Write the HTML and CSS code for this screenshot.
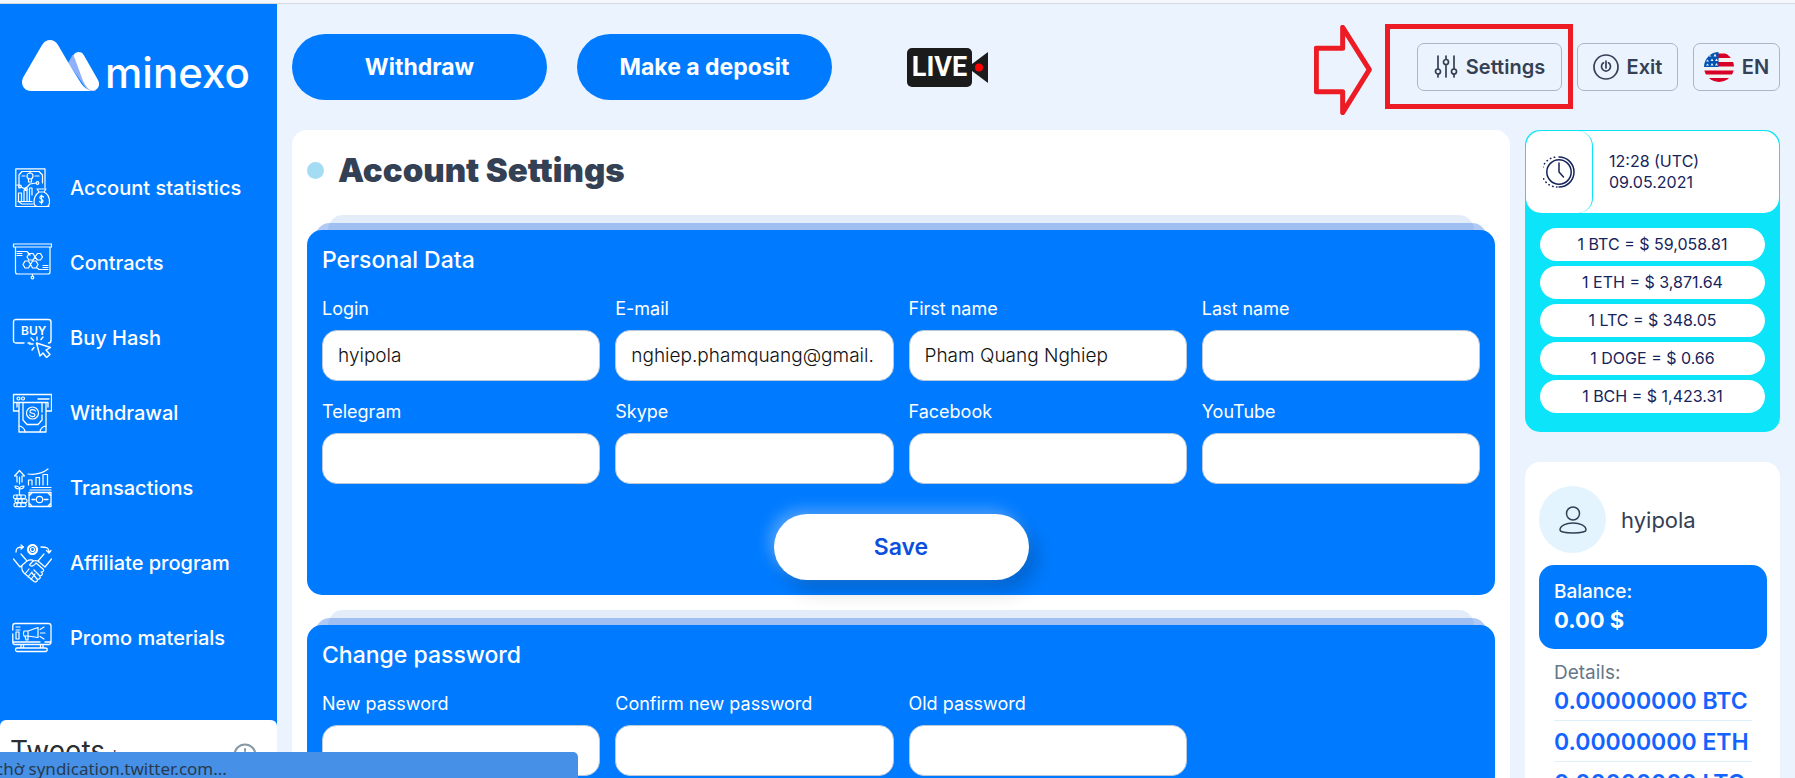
FILE: index.html
```
<!DOCTYPE html>
<html lang="en">
<head>
    <meta charset="UTF-8">
    <meta name="viewport" content="width=device-width, initial-scale=1.0">
    <title>Account Settings - minexo</title>
    <link rel="stylesheet" href="styles.css">
</head>
<body>
    <div class="page">
        <aside class="sidebar">
            <a class="logo" href="#">
                <svg width="77" height="51" viewBox="0 0 77 51">
                    <path fill="#8fb0fb" d="M46 23 L50.500 15 L58 16 L66 40 L74 51 H66 Z"/>
                    <path fill="#fff" d="M20 5 C24 -1.600 32 -1.600 36 5 L46.500 23 L57 40 C60 45 64 50 70 51 H9 C1 51 -2.500 43 2 36 Z"/>
                    <path fill="#fff" d="M51.500 15 C54 11 60 11 62 15.500 L76 40 C79 46 75 51 70 50.500 C66 50 62 44 60 38 Z"/>
                </svg>
                <span>minexo</span>
            </a>
            <nav class="menu">
                <a href="#">
                    <svg viewBox="0 0 40 40">
                        <path d="M33 20 V.800 H3.800 V38.500 H37 M7 20 V7 L10 3.500 H27 L30.500 7 V15 M7 34 L10 36 H21 M7 17 H5"/>
                        <circle cx="18" cy="8" r="3"/>
                        <path d="M16.500 11 V14 H19.500 V11 M18 3 V5 M10 8 H13 M23 8 H27"/>
                        <circle cx="8" cy="18.500" r="1.300"/><circle cx="14" cy="21" r="1.300"/><circle cx="25.500" cy="15" r="1.300"/>
                        <path d="M9 19 L13 21 L18 16 L24 15 M6.500 33 V25 H9.500 V33 M12 33 V22 H15 V33 M17.500 33 V20 H20 V27 M6 33.500 H20"/>
                        <path d="M27 24 L25 21 H34 L32 24 Z M27 24 C23 27 22 30 22 34 C22 37 23 38.500 26 38.500 H34 C37 38.500 37.500 37 37.500 34 C37.500 30 36 26 32 24"/>
                        <path d="M31.500 29 C30 27.500 27.500 28 28 30 C28.500 31.500 31 31 31 33 C31 35 28.500 35 27.500 33.500 M29.500 27 V36"/>
                    </svg>
                    Account statistics
                </a>
                <a href="#">
                    <svg viewBox="0 0 40 40">
                        <path d="M1.500 1 H39.500 V4 H1.500 Z M3.500 4 V29 Q3.500 31 5.500 31 H36 Q38 31 38 29 V4 M20.500 31 V33"/>
                        <circle cx="20.500" cy="34.500" r="1.300"/>
                        <path d="M5 8.500 H10 M5 10.500 H10 M5 12.500 H10 M11 8.500 H15 L18 12 M31 22.500 H36 M31 24.500 H36 M31 26.500 H36 M25 25 L27 26.500 H30"/>
                        <path d="M17 10.500 H21 L23 14 L21 17 H17 L15 14 Z M25.500 10.500 H28.500 L30.500 14 L28.500 17 H25.500 L23 14 Z M13 18 H16.500 L18.500 21.500 L16.500 25 H13 L11 21.500 Z M20.500 18 H24 L26 21.500 L24 25 H20.500 L18.500 21.500 Z"/>
                    </svg>
                    Contracts
                </a>
                <a href="#">
                    <svg viewBox="0 0 40 40">
                        <path stroke-width="1.400" d="M12 25 H4 Q1.500 25 1.500 22.500 V4 Q1.500 1.500 4 1.500 H36.500 Q39 1.500 39 4 V22.500 Q39 25 36.500 25 M16 25 H18"/>
                        <text x="9" y="17">BUY</text>
                        <path stroke-width="1.400" d="M24.500 25 L28 38 L31 35 L34.500 39.500 L38 36.500 L34 32 L38.500 29.500 Z M25 19 V22 M19 20 L21.500 22.500 M31 19 L29 21.500 M17.500 26 H21 M20 32 L22 29.500"/>
                    </svg>
                    Buy Hash
                </a>
                <a href="#">
                    <svg viewBox="0 0 40 40">
                        <path stroke-width="1.300" d="M7 18 H1.500 V1.500 H39.500 V18 H34 M5 9.500 H36 M1.500 9.500 H5 V14 M36 9.500 V14 M7 9.500 V39 H34 V9.500 M11 10 V27 L15 31.500 H26 L30 27 V22 M30 10 V19 M26 6 H37"/>
                        <circle cx="6.500" cy="5.500" r="1.500"/><circle cx="11" cy="5.500" r="1.500"/>
                        <circle cx="20.500" cy="20" r="6"/>
                        <path d="M23.500 18 C22 15.500 17.500 16.500 18 19 C18.500 21 23 19.500 23 22 C22.500 24.500 19 24 17.500 22 M7 33 C10 33 13 36 13 39 M34 33 C31 33 28 36 28 39"/>
                    </svg>
                    Withdrawal
                </a>
                <a href="#">
                    <svg viewBox="0 0 40 40">
                        <path d="M5 14 V8 H2.500 L7.500 2.500 L12.500 8 H10 V14 M7.500 9 V16 M16 6 C24 7 31 5 36 1 M16.500 17 V12 H20 V17 M24 17 V9.500 H27.500 V17 M31 17 V6.500 H35.500 V17"/>
                        <path d="M7.500 27 V21 C3 21 3 19 3 18 C6 18 7.500 19 7.500 21 C7.500 19 9 18 12 18 C12 20 11 21 7.500 21 M20 19.500 H39 M18 22 H39"/>
                        <path stroke-width="1.300" d="M17 38.500 V24.500 H39 V38.500 Z M17 28 L20 25 M36 25 L39 28 M17 35 L20 38 M36 38 L39 35 M20 31.500 H23 M32 31.500 H36"/>
                        <circle cx="27.500" cy="31.500" r="3.200"/>
                        <rect x="1.500" y="27" width="12" height="3.700" rx="1.500"/><rect x="3" y="31" width="12" height="3.700" rx="1.500"/><rect x="2" y="35" width="12" height="3.700" rx="1.500"/>
                        <path d="M5 27 V30 M9 27 V30 M6 31 V34.500 M10 31 V34.500 M5 35 V38 M9 35 V38"/>
                    </svg>
                    Transactions
                </a>
                <a href="#">
                    <svg viewBox="0 0 40 40">
                        <circle cx="20.500" cy="6.500" r="4.500" stroke-width="2.200" stroke-dasharray="2.500 1"/>
                        <circle cx="20.500" cy="6.500" r="2"/>
                        <path stroke-width="1.300" d="M4 9 C4 5 6 4 11 4 M9 2 L11.500 4 L9 6 M29 4 C35 4 37 5 37 9 M34.500 7.500 L37 10 L39 7.500"/>
                        <path stroke-width="1.200" d="M9 11 L15 18 L8 24 L1.500 16 M32 11 L26 18 L33 24 L39.500 16 M15 18 C18 16 21 17 22 18 C24 17 26 18 27 19 M10 23 C9 27 11 29 12 30 L22 38.500 C25 40 26 37 25 36 C28 37 29 34 27.500 33 C31 33 31 30 29 29 C32 29 32 27 31 26 L24 20 C22 23 19 24 17.500 22 L21 18 M13 31 L17 26 M16 34 L20 29 M19 36.500 L23 31 M22 27 L28 33 M20 30 L25 36"/>
                    </svg>
                    Affiliate program
                </a>
                <a href="#">
                    <svg viewBox="0 0 40 40">
                        <path stroke-width="1.300" d="M.800 12 V8 Q.800 5.500 3 5.500 H36.500 Q39 5.500 39 8 V24 Q39 26.500 36.500 26.500 H3 Q.800 26.500 .800 24 V16 M1 24 H28 M33 24 H39 M9 26.500 V30 M11.500 26.500 V30 M28.500 26.500 V30 M31 26.500 V30 M5 30 H33 C36 30 36 33.500 33 33.500 H5 C3 33.500 3 30 5 30"/>
                        <path d="M4 9 H8 M4 12 H8 M4 14 H7 V21 H4 Z M12 13 H16 L26 9.500 V19.500 L16 18 H12 Q11 15.500 12 13 M16 13 V22 H14 L13 18 M28.500 15 H33 M28 11.500 L32 9 M28 18.500 L32 21"/>
                    </svg>
                    Promo materials
                </a>
            </nav>
            <section class="tweets">
                <h2>Tweets <small>by</small></h2>
                <svg width="24" height="24" viewBox="0 0 24 24"><circle cx="12" cy="12" r="10.500"/><path d="M12 6 V8 M12 11 V17"/></svg>
            </section>
        </aside>

        <div class="content">
            <header class="topbar">
                <button type="button" class="btn">Withdraw</button>
                <button type="button" class="btn">Make a deposit</button>
                <a class="live" href="#">
                    <span>LIVE</span>
                    <svg width="16" height="31" viewBox="0 0 16 31"><path fill="#1b1b1b" d="M16 0 V31 L0 19 V12 Z"/><circle cx="7" cy="15.500" r="4" fill="#f00"/></svg>
                </a>
                <nav class="tools">
                    <div class="marked">
                        <a class="tool tool-settings" href="#">
                            <svg width="24" height="24" viewBox="0 0 24 24"><path d="M4 1 V14 M4 19 V22 M12 1 V4 M12 10 V22 M20 1 V14 M20 19 V22"/><circle cx="4" cy="16.500" r="2.500"/><circle cx="12" cy="7" r="2.500"/><circle cx="20" cy="16.500" r="2.500"/></svg>
                            Settings
                        </a>
                        <svg class="arrow" width="58" height="90" viewBox="72 75 174 270"><path d="M79 145 H158 V82 L238 209 L158 338 V275 H79 Z"/></svg>
                    </div>
                    <a class="tool" href="#">
                        <svg width="26" height="26" viewBox="0 0 26 26"><circle cx="13" cy="13" r="12"/><path d="M10.500 8.800 A4.500 4.500 0 1 0 15.500 8.800 M13 7 V14"/></svg>
                        Exit
                    </a>
                    <button type="button" class="tool tool-lang">
                        <svg class="flag" width="30" height="30" viewBox="0 0 30 30">
                            <clipPath id="round"><circle cx="15" cy="15" r="15"/></clipPath>
                            <g clip-path="url(#round)">
                                <rect width="30" height="30" fill="#f2f2f2"/>
                                <path fill="#d80027" d="M14 1.500 H30 V6 H14 Z M14 10 H30 V14.500 H14 Z M0 18.500 H30 V22.500 H0 Z M0 26 H30 V30 H0 Z"/>
                                <rect width="14.500" height="15" fill="#0052b4"/>
                                <path fill="#f2f2f2" d="M6 3 l1.500 1.500 h-3 Z M11 1.500 l1.500 3 h-3 Z M3.500 7.500 l1.500 2 h-3 Z M8 6.500 l1.500 2.500 h-3 Z M12.500 6.500 l1.500 2.500 h-3 Z M3.500 11.500 l1.500 2 h-3 Z M8 11 l1.500 2.500 h-3 Z M12.500 11 l1.500 2.500 h-3 Z"/>
                            </g>
                        </svg>
                        EN
                    </button>
                </nav>
            </header>

            <div class="columns">
                <main class="panel">
                    <h1>Account Settings</h1>
                    <form class="card">
                        <h2>Personal Data</h2>
                        <div class="fields">
                            <div class="field"><label for="login">Login</label><input type="text" id="login" value="hyipola"></div>
                            <div class="field"><label for="email">E-mail</label><input type="text" id="email" value="nghiep.phamquang@gmail."></div>
                            <div class="field"><label for="first-name">First name</label><input type="text" id="first-name" value="Pham Quang Nghiep"></div>
                            <div class="field"><label for="last-name">Last name</label><input type="text" id="last-name"></div>
                            <div class="field"><label for="telegram">Telegram</label><input type="text" id="telegram"></div>
                            <div class="field"><label for="skype">Skype</label><input type="text" id="skype"></div>
                            <div class="field"><label for="facebook">Facebook</label><input type="text" id="facebook"></div>
                            <div class="field"><label for="youtube">YouTube</label><input type="text" id="youtube"></div>
                        </div>
                        <button type="submit" class="btn btn-save">Save</button>
                    </form>
                    <form class="card">
                        <h2>Change password</h2>
                        <div class="fields">
                            <div class="field"><label for="new-password">New password</label><input type="password" id="new-password"></div>
                            <div class="field"><label for="confirm-password">Confirm new password</label><input type="password" id="confirm-password"></div>
                            <div class="field"><label for="old-password">Old password</label><input type="password" id="old-password"></div>
                        </div>
                    </form>
                </main>

                <aside class="info">
                    <section class="rates">
                        <div class="clock">
                            <div class="clock-icon">
                                <svg width="32" height="32" viewBox="0 0 32 32">
                                    <circle cx="16" cy="16" r="12.200"/>
                                    <path d="M16 1 A15 15 0 0 1 16 31"/>
                                    <path stroke-dasharray=".5 3.500" d="M14 31 A15 15 0 0 1 14 1"/>
                                    <path d="M16 7 V16 L20.500 21"/>
                                </svg>
                            </div>
                            <p>12:28 (UTC)<br>09.05.2021</p>
                        </div>
                        <ul>
                            <li>1 BTC = $ 59,058.81</li>
                            <li>1 ETH = $ 3,871.64</li>
                            <li>1 LTC = $ 348.05</li>
                            <li>1 DOGE = $ 0.66</li>
                            <li>1 BCH = $ 1,423.31</li>
                        </ul>
                    </section>
                    <section class="user">
                        <div class="user-name">
                            <div class="avatar">
                                <svg width="28" height="28" viewBox="0 0 28 28"><circle cx="14" cy="7.500" r="6.500"/><path d="M1 24 C1 19.500 7 17 14 17 C21 17 27 19.500 27 24 C27 28 1 28 1 24 Z"/></svg>
                            </div>
                            hyipola
                        </div>
                        <div class="balance">Balance: <strong>0.00 $</strong></div>
                        <div class="details">
                            <p>Details:</p>
                            <ul>
                                <li>0.00000000 BTC</li>
                                <li>0.00000000 ETH</li>
                                <li>0.00000000 LTC</li>
                            </ul>
                        </div>
                    </section>
                </aside>
            </div>
        </div>
    </div>
    <div class="status"><span>chờ syndication.twitter.com...</span></div>
</body>
</html>
```
FILE: styles.css
```
* {
    box-sizing: border-box;
    margin: 0;
    padding: 0;
}
body {
    font-family: Inter, "Open Sans", sans-serif;
    height: 100vh;
    overflow: hidden;
    background-color: #ebf3ff;
    border-top: 3px solid #f4f7fc;
    color: #344054;
}
a {
    color: inherit;
    text-decoration: none;
}
ul {
    list-style: none;
}
svg {
    flex: none;
    fill: none;
    stroke-linecap: round;
    stroke-linejoin: round;
}
.page {
    display: flex;
    border-top: 1px solid #d5dae2;
}

/* Sidebar */
.sidebar {
    flex: none;
    width: 277px;
    min-height: 100vh;
    background-color: #007bff;
    color: #fff;
}
.logo {
    display: flex;
    height: 146px;
    padding: 36px 22px;
    gap: 6px;
    font-size: 42px;
    font-weight: 500;
    line-height: 66px;
}
.menu a {
    display: flex;
    align-items: center;
    gap: 18px;
    height: 75px;
    padding-left: 12px;
    font-size: 20px;
    font-weight: 500;
}
.menu svg {
    width: 40px;
    height: 40px;
    stroke: #fff;
    stroke-width: 1.2;
}
.menu text {
    font-size: 12px;
    font-weight: 600;
    fill: #fff;
    stroke: none;
}
.tweets {
    display: flex;
    justify-content: space-between;
    margin-top: 45px;
    padding: 11px 20px 11px 10px;
    background-color: #fff;
    border-radius: 6px;
    color: #292f33;
}
.tweets h2 {
    font-size: 28px;
    font-weight: 400;
    line-height: 40px;
}
.tweets small {
    font-size: 14px;
}
.tweets svg {
    margin-top: 12px;
    stroke: #8899a6;
    stroke-width: 2;
}

/* Top bar */
.content {
    flex: 1;
    min-width: 0;
    padding: 0 15px;
}
.topbar {
    display: flex;
    align-items: center;
    gap: 30px;
    padding: 30px 0;
}
.btn {
    width: 255px;
    height: 66px;
    border: none;
    border-radius: 33px;
    background-color: #007bff;
    color: #fff;
    font-family: inherit;
    font-size: 23px;
    font-weight: 700;
    cursor: pointer;
}
.live {
    display: flex;
    align-items: center;
    margin-left: 45px;
}
.live span {
    width: 65px;
    height: 39px;
    border-radius: 5px;
    background-color: #1b1b1b;
    color: #fff;
    font-family: "Liberation Sans Narrow", "Roboto", sans-serif;
    font-size: 27px;
    font-weight: 700;
    line-height: 39px;
    text-align: center;
}
.tools {
    display: flex;
    gap: 15px;
    margin-left: auto;
}
.tool {
    display: flex;
    align-items: center;
    justify-content: center;
    gap: 8px;
    width: 101px;
    height: 48px;
    border: 1px solid #a9b6c3;
    border-radius: 7px;
    background: none;
    color: #344054;
    font-family: inherit;
    font-size: 20px;
    font-weight: 600;
}
.tool svg {
    stroke: #344054;
    stroke-width: 1.7;
}
.tool-settings {
    width: 145px;
}
.tool-lang {
    width: 87px;
}
.tool .flag {
    stroke: none;
}

/* Red frame and arrow around the settings link */
.marked {
    position: relative;
}
.marked::before {
    content: "";
    position: absolute;
    inset: -19px -11px -18px -32px;
    border: 5px solid #ed1c24;
    pointer-events: none;
}
.arrow {
    position: absolute;
    top: -18px;
    left: -103px;
    stroke: #ed1c24;
    stroke-width: 15;
}

/* Main panel */
.columns {
    display: flex;
    align-items: flex-start;
    gap: 15px;
}
.panel {
    position: relative;
    z-index: 0;
    flex: 1;
    min-width: 0;
    padding: 15px;
    background-color: #fff;
    border-radius: 15px;
}
h1 {
    display: flex;
    align-items: center;
    gap: 14px;
    margin-bottom: 35px;
    font-size: 33px;
    font-weight: 900;
    line-height: 50px;
}
h1::before {
    content: "";
    width: 17px;
    height: 17px;
    border-radius: 50%;
    background-color: #a3dcf3;
}
.card {
    position: relative;
    margin-bottom: 30px;
    padding: 15px;
    border-radius: 15px;
    color: #fff;
    background-color: #007bff;
}
/* two sheets peeking out behind the card */
.card::before,
.card::after {
    content: "";
    position: absolute;
    z-index: -1;
    height: 40px;
    border-radius: 15px;
}
.card::before {
    top: -15px;
    left: 21px;
    right: 21px;
    background-color: #e3edfa;
}
.card::after {
    top: -7px;
    left: 8px;
    right: 8px;
    background-color: rgba(57, 122, 230, 0.4);
}
.card h2 {
    margin-bottom: 24px;
    font-size: 23px;
    font-weight: 500;
    line-height: 30px;
}
.fields {
    display: grid;
    grid-template-columns: repeat(4, minmax(0, 1fr));
    gap: 21px 15px;
}
.field {
    display: flex;
    flex-direction: column;
    gap: 11px;
}
.field label {
    font-size: 18px;
    line-height: 20px;
}
.field input {
    width: 100%;
    height: 51px;
    padding: 0 15px;
    border: 1px solid #b9c9da;
    border-radius: 15px;
    background-color: #fff;
    color: #111;
    font-family: inherit;
    font-size: 19px;
    font-weight: 300;
}
.btn-save {
    display: block;
    margin: 30px auto 0;
    background-color: #fff;
    color: #0b4fdc;
    font-weight: 600;
    box-shadow: 8px 10px 20px rgba(0, 0, 0, 0.2), -5px -5px 14px rgba(255, 255, 255, 0.3);
}

/* Right column */
.info {
    flex: none;
    width: 255px;
}
.rates {
    padding: 1px;
    border-radius: 15px;
    background-color: #0ce4fa;
    color: #16245c;
    font-size: 16px;
}
.clock {
    display: flex;
    align-items: center;
    gap: 16px;
    height: 82px;
    border-radius: 15px;
    background-color: #fff;
    line-height: 21px;
}
.clock-icon {
    display: flex;
    align-items: center;
    justify-content: center;
    width: 67px;
    height: 82px;
    border-right: 1px solid #0ce4fa;
    border-radius: 15px;
}
.clock svg {
    stroke: #16245c;
    stroke-width: 1.5;
}
.rates ul {
    display: grid;
    gap: 5px;
    padding: 15px 14px 18px;
}
.rates li {
    border-radius: 17px;
    background-color: #fff;
    line-height: 33px;
    text-align: center;
}
.user {
    margin-top: 30px;
    padding: 24px 13px 24px 14px;
    border-radius: 15px;
    background-color: #fff;
}
.user-name {
    display: flex;
    align-items: center;
    gap: 15px;
    font-size: 22px;
}
.avatar {
    display: flex;
    align-items: center;
    justify-content: center;
    width: 67px;
    height: 67px;
    border-radius: 50%;
    background-color: #e3f4ff;
}
.avatar svg {
    stroke: #344054;
    stroke-width: 1.5;
}
.balance {
    margin-top: 12px;
    padding: 13px 15px 15px;
    border-radius: 15px;
    background-color: #007bff;
    color: #fff;
    font-size: 19px;
    font-weight: 500;
    line-height: 28px;
}
.balance strong {
    display: block;
    font-size: 22px;
    font-weight: 700;
}
.details {
    padding: 10px 15px 0;
    line-height: 28px;
}
.details p {
    color: #667788;
    font-size: 19px;
}
.details li {
    margin-bottom: 7px;
    padding-bottom: 5px;
    border-bottom: 1px solid #e0f1fc;
    color: #1463ff;
    font-size: 23px;
    font-weight: 600;
    white-space: nowrap;
}

/* Browser status line */
.status {
    position: fixed;
    left: 0;
    bottom: 0;
    width: 578px;
    height: 26px;
    overflow: hidden;
    border-top-right-radius: 5px;
    background-color: #4690e7;
    color: #263b50;
    font-family: "Noto Sans", sans-serif;
    font-size: 17px;
    line-height: 34px;
}
.status span {
    margin-left: -5px;
}
```
